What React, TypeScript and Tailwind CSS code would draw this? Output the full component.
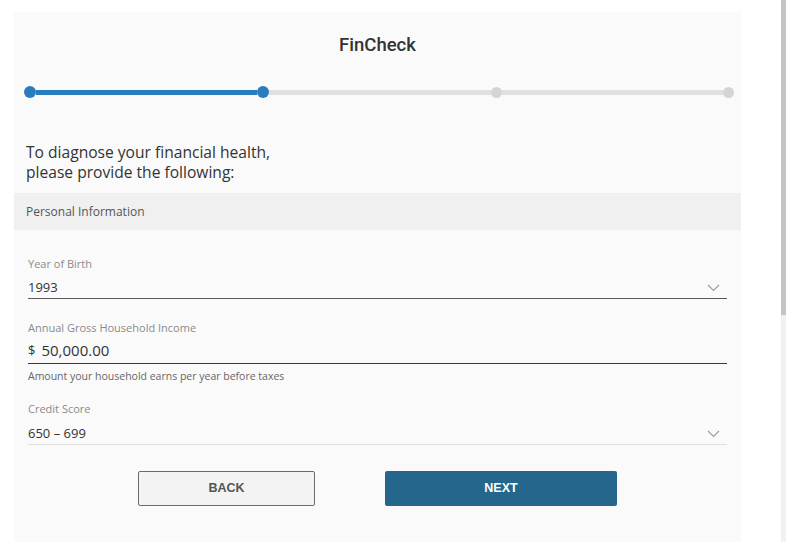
import React from "react";

const Chevron = () => (
  <svg width="13" height="8" viewBox="0 0 13 8" fill="none">
    <polyline points="1,1 6.5,6.5 12,1" stroke="#9a9a9a" strokeWidth="1.1" />
  </svg>
);

export default function App() {
  return (
    <div className="flex w-[786px] h-[542px] bg-white overflow-hidden" style={{ fontFamily: "'Open Sans', sans-serif" }}>
      <div className="flex-1">
        <div className="ml-[14px] mt-[12px] w-[727px] h-[530px] bg-[#fafafa]">
          <div className="pt-[21px] h-[45px] text-center text-[18.5px] leading-[24px] font-medium text-[#333]" style={{ fontFamily: "Roboto, sans-serif" }}>
            FinCheck
          </div>
          <div className="mt-[29px] ml-[10px] mr-[7px] h-[12px] flex items-center">
            <div className="w-[12px] h-[12px] rounded-full bg-[#2b7bbf] shrink-0" />
            <div className="flex-1 h-[5px] bg-[#2b7bbf]" />
            <div className="w-[12px] h-[12px] rounded-full bg-[#2b7bbf] shrink-0" />
            <div className="flex-1 h-[5px] bg-[#e0e0e0]" />
            <div className="w-[11px] h-[11px] rounded-full bg-[#d4d4d4] shrink-0" />
            <div className="flex-1 h-[5px] bg-[#e0e0e0]" />
            <div className="w-[11px] h-[11px] rounded-full bg-[#d4d4d4] shrink-0" />
          </div>
          <div className="mt-[44px] px-[12px] text-[15.6px] leading-[20px] text-[#333]">
            <div>To diagnose your financial health,</div>
            <div>please provide the following:</div>
          </div>
          <div className="mt-[11px] h-[37px] bg-[#f0f0f0] px-[12px] flex items-center text-[12px] text-[#555]">
            Personal Information
          </div>
          <div className="px-[14px]">
            <div className="mt-[26px] h-[16px] leading-[16px] text-[11px] text-[#8a8a8a]">Year of Birth</div>
            <div className="mt-[5px] h-[22px] flex items-center justify-between border-b border-[#5a5a5a] text-[13px] text-[#333]">
              <span>1993</span>
              <span className="mr-[7px] flex"><Chevron /></span>
            </div>
            <div className="mt-[21px] h-[16px] leading-[16px] text-[11px] text-[#8a8a8a]">Annual Gross Household Income</div>
            <div className="mt-[3px] h-[25px] pt-[1px] flex items-start border-b border-[#3a3a3a] text-[15px] leading-[20px] text-[#333]">
              <span className="text-[13px] mr-[6px]">$</span>
              <span>50,000.00</span>
            </div>
            <div className="mt-[5px] h-[14px] leading-[14px] text-[10.5px] text-[#666]">Amount your household earns per year before taxes</div>
            <div className="mt-[18px] h-[16px] leading-[16px] text-[11px] text-[#8a8a8a]">Credit Score</div>
            <div className="mt-[6px] h-[22px] flex items-center justify-between border-b border-[#e0e0e0] text-[13px] text-[#333]">
              <span>650 – 699</span>
              <span className="mr-[7px] flex"><Chevron /></span>
            </div>
          </div>
          <div className="mt-[26px] flex justify-center gap-[70px]" style={{ fontFamily: "'Liberation Sans', Arial, sans-serif" }}>
            <button className="w-[177px] h-[35px] rounded-[2px] border border-[#6b6b6b] bg-[#f3f3f3] text-[12.5px] font-bold text-[#555]">
              BACK
            </button>
            <button className="w-[232px] h-[35px] rounded-[2px] bg-[#25678c] text-[12.5px] font-bold text-white">
              NEXT
            </button>
          </div>
        </div>
      </div>
      <div className="w-[5px] h-[542px] bg-[#f1f1f1] flex flex-col">
        <div className="h-[315px] bg-[#c4c4c4]" />
      </div>
    </div>
  );
}
